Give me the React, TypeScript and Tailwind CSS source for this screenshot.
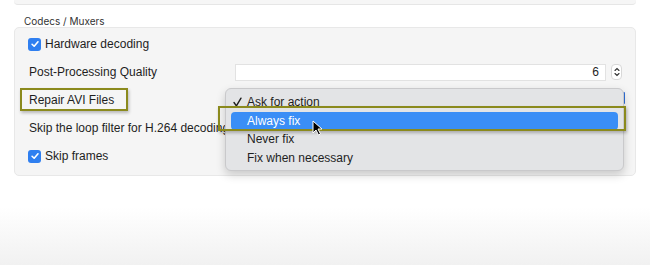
import React from 'react';

const font = { fontFamily: '"Liberation Sans", Arial, sans-serif' };

const Checkbox = () => (
  <span className="flex h-[13px] w-[13px] items-center justify-center rounded-[3px] bg-[#2f7ff0]">
    <svg viewBox="0 0 12 12" className="h-[10px] w-[10px]">
      <path d="M2.5 6.3 L5 8.7 L9.6 3.3" fill="none" stroke="white" strokeWidth="1.9" strokeLinecap="round" strokeLinejoin="round" />
    </svg>
  </span>
);

const Row: React.FC<{ children: React.ReactNode }> = ({ children }) => (
  <div className="flex h-[28px] items-center">{children}</div>
);

const options = ['Ask for action', 'Always fix', 'Never fix', 'Fix when necessary'];

export default function App() {
  return (
    <div
      className="relative h-[265px] w-[650px] overflow-hidden bg-gradient-to-b from-white from-78% to-[#f1f1f1] text-[12px] text-[#1e1e1e]"
      style={font}
    >
      <div className="mx-[14px] h-[5px] rounded-b-[4px] border-b border-[#e6e6e6] bg-[#f6f6f6]" />

      <div className="pl-[24px] pt-[10px] font-['Inter'] text-[10px] leading-[12px] text-[#333]">Codecs / Muxers</div>

      <div className="mx-[14px] mt-0 rounded-[5px] border border-[#e8e8e8] bg-[#f5f5f5] pb-[5px] pt-[2px] pl-[13px] pr-[13px]">
        <Row>
          <Checkbox />
          <span className="ml-[4px]">Hardware decoding</span>
        </Row>
        <Row>
          <span className="w-[207px] pl-px">Post-Processing Quality</span>
          <div className="flex h-[17px] flex-1 items-center justify-end border border-[#e2e2e2] bg-white pr-[6px] text-[12px]">6</div>
          <div className="ml-[5px] flex h-[16px] w-[11px] flex-col items-center justify-center rounded-[4px] border border-[#d8d8d8] bg-white">
            <svg viewBox="0 0 8 12" className="h-[12px] w-[8px]">
              <path d="M2 4.5 L4 2.5 L6 4.5 M2 7.5 L4 9.5 L6 7.5" fill="none" stroke="#333" strokeWidth="1.1" strokeLinecap="round" />
            </svg>
          </div>
        </Row>
        <Row>
          <span className="pl-px">Repair AVI Files</span>
          <div className="ml-auto mr-[-3px] mt-[-4px] h-[12px] w-[2px] rounded-full bg-[#2f6fd8]" />
        </Row>
        <Row>
          <span className="pl-px">Skip the loop filter for H.264 decoding</span>
        </Row>
        <Row>
          <Checkbox />
          <span className="ml-[4px]">Skip frames</span>
        </Row>
      </div>

      {/* popup menu */}
      <div className="absolute left-[225px] top-[88px] h-[83px] w-[399px] rounded-[6px] border border-[#c9c9cb] bg-[#e3e4e6] px-[5px] pt-[4px] shadow-[0_4px_10px_rgba(0,0,0,0.18)]">
        {options.map((o, i) => (
          <div
            key={o}
            className={
              i === 1
                ? 'flex h-[18.5px] items-center rounded-[4px] bg-[#3a8ef6] text-white'
                : 'flex h-[18.5px] items-center'
            }
          >
            <span className="flex w-[16px] items-center pl-[2px]">
              {i === 0 && (
                <svg viewBox="0 0 9 10" className="h-[10px] w-[9px]">
                  <path d="M1 5.5 L3.4 8.8 L8 1.2" fill="none" stroke="#1e1e1e" strokeWidth="1.4" strokeLinecap="round" strokeLinejoin="round" />
                </svg>
              )}
            </span>
            <span>{o}</span>
          </div>
        ))}
      </div>

      {/* highlight boxes */}
      <div className="absolute left-[20px] top-[88px] h-[23px] w-[108px] border-2 border-[#8b8a1d] shadow-[1px_2px_3px_rgba(0,0,0,0.25)]" />
      <div className="absolute left-[218px] top-[106px] h-[25px] w-[408px] border-2 border-[#8b8a1d] shadow-[1px_2px_3px_rgba(0,0,0,0.25)]" />

      {/* cursor */}
      <svg className="absolute left-[312px] top-[120px]" width="12" height="16" viewBox="0 0 12 16">
        <path d="M1 1 L1 13 L4 10 L6.5 15 L8.5 14 L6 9 L10 9 Z" fill="black" stroke="white" strokeWidth="1" />
      </svg>
    </div>
  );
}
